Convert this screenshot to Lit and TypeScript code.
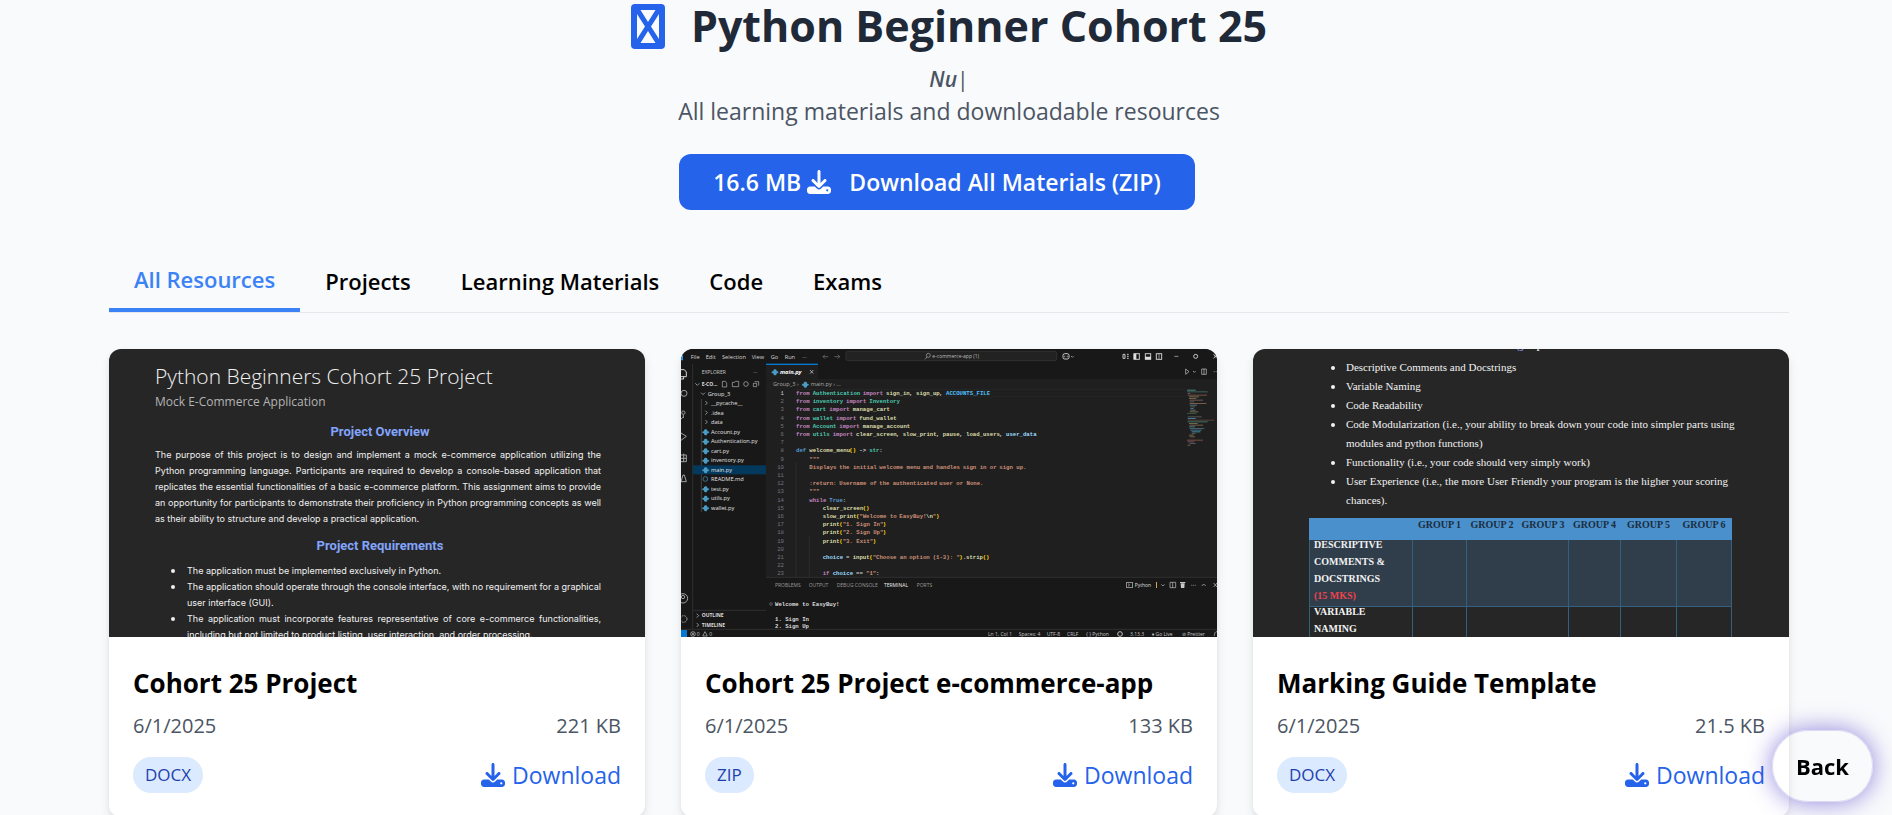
import { LitElement, html, svg, css } from "lit";
import { customElement, property, state } from "lit/decorators.js";
import { classMap } from "lit/directives/class-map.js";

const downloadIcon = html`<svg class="dl" viewBox="0 0 512 512" aria-hidden="true">
  <path
    fill="currentColor"
    d="M288 32c0-17.7-14.3-32-32-32s-32 14.3-32 32V274.7l-73.4-73.4c-12.5-12.5-32.8-12.5-45.3 0s-12.5 32.8 0 45.3l128 128c12.5 12.5 32.8 12.5 45.3 0l128-128c12.5-12.5 12.5-32.8 0-45.3s-32.8-12.5-45.3 0L288 274.7V32zM64 352c-35.3 0-64 28.7-64 64v32c0 35.3 28.7 64 64 64H448c35.3 0 64-28.7 64-64V416c0-35.3-28.7-64-64-64H346.5l-45.3 45.3c-25 25-65.5 25-90.5 0L165.5 352H64zm368 56a24 24 0 1 1 0 48 24 24 0 1 1 0-48z"
  />
</svg>`;

/* ---------- Preview: project brief ---------- */

@customElement("brief-preview")
export class BriefPreview extends LitElement {
  static styles = css`
    :host {
      display: block;
      height: 100%;
      box-sizing: border-box;
      overflow: hidden;
      background: #262626;
      color: #f0f0f0;
      padding: 12px 44px 0 46px;
      font-family: Inter, Roboto, sans-serif;
      font-size: 9px;
      line-height: 16px;
    }
    .title {
      font-family: "Open Sans", "Noto Sans", sans-serif;
      font-weight: 300;
      font-size: 21px;
      line-height: 30px;
    }
    .sub {
      font-family: "Open Sans", "Noto Sans", sans-serif;
      font-size: 12px;
      line-height: 22px;
      color: #b4b4b4;
    }
    .head {
      font-family: Roboto, "Liberation Sans", sans-serif;
      font-weight: 700;
      font-size: 13px;
      line-height: 18px;
      margin-top: 10px;
      color: #82a4fb;
      text-align: center;
      padding-left: 4px;
    }
    .text {
      margin-top: 6px;
    }
    .line {
      display: block;
      white-space: nowrap;
    }
    .full {
      text-align: justify;
      text-align-last: justify;
    }
    ul {
      margin: 8px 0 0;
      padding: 0 0 0 32px;
      list-style: none;
    }
    li {
      position: relative;
    }
    li::before {
      content: "";
      position: absolute;
      left: -16px;
      top: 6px;
      width: 4px;
      height: 4px;
      border-radius: 50%;
      background: #f0f0f0;
    }
  `;

  render() {
    return html`
      <div class="title">Python Beginners Cohort 25 Project</div>
      <div class="sub">Mock E-Commerce Application</div>
      <div class="head">Project Overview</div>
      <div class="text">
        <span class="line full">The purpose of this project is to design and implement a mock e-commerce application utilizing the</span>
        <span class="line full">Python programming language. Participants are required to develop a console-based application that</span>
        <span class="line full">replicates the essential functionalities of a basic e-commerce platform. This assignment aims to provide</span>
        <span class="line full">an opportunity for participants to demonstrate their proficiency in Python programming concepts as well</span>
        <span class="line">as their ability to structure and develop a practical application.</span>
      </div>
      <div class="head">Project Requirements</div>
      <ul>
        <li><span class="line">The application must be implemented exclusively in Python.</span></li>
        <li>
          <span class="line full">The application should operate through the console interface, with no requirement for a graphical</span>
          <span class="line">user interface (GUI).</span>
        </li>
        <li>
          <span class="line full">The application must incorporate features representative of core e-commerce functionalities,</span>
          <span class="line">including but not limited to product listing, user interaction, and order processing.</span>
        </li>
      </ul>
    `;
  }
}

/* ---------- Preview: code editor ---------- */

const KEY = "#c586c0";
const MOD = "#4ec9b0";
const FN = "#dcdcaa";
const STR = "#ce9178";
const VAR = "#9cdcfe";
const DEF = "#569cd6";
const CONST = "#4fc1ff";
const TXT = "#d4d4d4";
const GOLD = "#ffd700";

type Token = [string, string];

const code: [number, number, Token[]][] = [
  [1, 0, [[KEY, "from"], [MOD, " Authentication"], [KEY, " import"], [FN, " sign_in"], [TXT, ","], [FN, " sign_up"], [TXT, ","], [CONST, " ACCOUNTS_FILE"]]],
  [2, 0, [[KEY, "from"], [MOD, " inventory"], [KEY, " import"], [MOD, " Inventory"]]],
  [3, 0, [[KEY, "from"], [MOD, " cart"], [KEY, " import"], [FN, " manage_cart"]]],
  [4, 0, [[KEY, "from"], [MOD, " wallet"], [KEY, " import"], [FN, " fund_wallet"]]],
  [5, 0, [[KEY, "from"], [MOD, " Account"], [KEY, " import"], [FN, " manage_account"]]],
  [6, 0, [[KEY, "from"], [MOD, " utils"], [KEY, " import"], [FN, " clear_screen"], [TXT, ","], [FN, " slow_print"], [TXT, ","], [FN, " pause"], [TXT, ","], [FN, " load_users"], [TXT, ","], [VAR, " user_data"]]],
  [7, 0, []],
  [8, 0, [[DEF, "def"], [FN, " welcome_menu"], [GOLD, "()"], [TXT, " ->"], [MOD, " str"], [TXT, ":"]]],
  [9, 4, [[STR, '"""']]],
  [10, 4, [[STR, "Displays"], [STR, " the initial"], [STR, " welcome menu"], [STR, " and handles"], [STR, " sign in or"], [STR, " sign up."]]],
  [11, 0, []],
  [12, 4, [[STR, ":return:"], [STR, " Username of"], [STR, " the"], [STR, " authenticated"], [STR, " user or None."]]],
  [13, 4, [[STR, '"""']]],
  [14, 4, [[KEY, "while"], [DEF, " True"], [TXT, ":"]]],
  [15, 8, [[FN, "clear_screen"], [GOLD, "()"]]],
  [16, 8, [[FN, "slow_print"], [GOLD, "("], [STR, '"Welcome to'], [STR, " EasyBuy!"], [FN, "\\n"], [STR, '"'], [GOLD, ")"]]],
  [17, 8, [[FN, "print"], [GOLD, "("], [STR, '"1. Sign In"'], [GOLD, ")"]]],
  [18, 8, [[FN, "print"], [GOLD, "("], [STR, '"2. Sign Up"'], [GOLD, ")"]]],
  [19, 8, [[FN, "print"], [GOLD, "("], [STR, '"3. Exit"'], [GOLD, ")"]]],
  [20, 0, []],
  [21, 8, [[VAR, "choice"], [TXT, " ="], [FN, " input"], [GOLD, "("], [STR, '"Choose an'], [STR, " option"], [STR, ' (1-3): "'], [GOLD, ")"], [TXT, "."], [FN, "strip"], [GOLD, "()"]]],
  [22, 0, []],
  [23, 8, [[KEY, "if"], [VAR, " choice"], [TXT, " =="], [STR, ' "1"'], [TXT, ":"]]],
];

const CELL = 10;
const CODE_X = 345;

function codeLine([n, indent, tokens]: [number, number, Token[]]) {
  const y = 138 + Math.round((n - 1) * 24.6);
  let col = indent;
  return svg`
    <text class="mono" x="309" y=${y} text-anchor="end" fill=${n === 1 ? "#cccccc" : "#6e7681"}>${n}</text>
    ${tokens.map(([color, raw]) => {
      const text = raw.trimStart();
      const x = CODE_X + (col + raw.length - text.length) * CELL;
      col += raw.length;
      return svg`<text class="mono strong" x=${x} y=${y} fill=${color}>${text}</text>`;
    })}
  `;
}

const files: [string, string][] = [
  ["dir", "__pycache__"],
  ["dir", ".idea"],
  ["dir", "data"],
  ["py", "Account.py"],
  ["py", "Authentication.py"],
  ["py", "cart.py"],
  ["py", "inventory.py"],
  ["py", "main.py"],
  ["md", "README.md"],
  ["py", "test.py"],
  ["py", "utils.py"],
  ["py", "wallet.py"],
];

function pyMark(x: number, y: number) {
  return svg`<path fill="#4b9cc4" d="M${x} ${y - 7}h4l3 3v3h3l3 3-3 3h-3v3l-3 3h-4l-3-3v-3h-3l-3-3 3-3h3v-3z" />`;
}

function fileRow([kind, name]: [string, string], i: number) {
  const y = 162 + Math.round(i * 28.5);
  const active = name === "main.py";
  return svg`
    ${active ? svg`<rect x="36" y=${y - 13} width="219" height="27" fill="#04395e" />` : null}
    ${kind === "dir"
      ? svg`<path d="M73 ${y - 6}l6 6-6 6" stroke="#c5c5c5" stroke-width="2" fill="none" />`
      : kind === "py"
        ? pyMark(72, y)
        : svg`<circle cx="73" cy=${y} r="7" fill="none" stroke="#519aba" stroke-width="2" />`}
    <text class="ui" x="90" y=${y + 6} fill="#e2e2e2">${name}</text>
  `;
}

const minimap: [number, number, string][] = [
  [0, 26, "#4b8a7d"], [0, 62, "#3f5f58"], [2, 8, "#6d4a6a"], [2, 58, "#7a4f3f"], [6, 30, "#6d6d55"], [6, 22, "#7a5a48"], [8, 40, "#6a5a50"],
  [8, 14, "#555"], [8, 50, "#7a5a48"], [8, 22, "#46768a"], [10, 14, "#5a5a4a"], [10, 10, "#3f6f8a"], [10, 16, "#666"], [8, 26, "#6a6a50"],
  [0, 28, "#37513a"], [0, 0, ""], [2, 42, "#555"], [2, 24, "#3f7f9a"], [2, 80, "#56423a"], [2, 60, "#3f6f5f"], [6, 26, "#6a6a50"],
  [8, 40, "#7a5a48"], [6, 18, "#46768a"], [8, 44, "#46606a"], [10, 34, "#3f6f8a"], [14, 26, "#3f8aa0"], [14, 12, "#555"], [6, 14, "#6a6a50"],
  [8, 16, "#7a5a48"], [0, 0, ""], [0, 48, "#7a4f3f"], [2, 20, "#6d4a6a"], [8, 18, "#555"], [2, 8, "#6a6a50"],
];

@customElement("editor-preview")
export class EditorPreview extends LitElement {
  static styles = css`
    :host {
      display: block;
      height: 100%;
      background: #181818;
    }
    .shot {
      display: block;
      width: 100%;
      height: 100%;
    }
    .ui {
      font-family: "Open Sans", "Noto Sans", sans-serif;
      font-size: 17px;
      font-weight: 500;
    }
    .small {
      font-size: 15px;
    }
    .mono {
      font-family: "Liberation Mono", "DejaVu Sans Mono", monospace;
      font-size: 17px;
    }
    .strong {
      font-weight: 700;
    }
  `;

  render() {
    return html`<svg
      class="shot"
      viewBox="0 0 1608 864"
      preserveAspectRatio="xMidYMid slice"
      role="img"
      aria-label="Code editor with main.py open"
    >
      <rect width="1608" height="864" fill="#181818" />
      <rect x="255" y="90" width="1353" height="594" fill="#1f1f1f" />
      <rect x="255" y="44" width="156" height="50" fill="#1f1f1f" />
      <rect x="255" y="44" width="156" height="4" fill="#0078d4" />
      <path d="M35 45V841M35 784H255M255 685H1608M0 841H1608" stroke="#2f2f2f" stroke-width="3" />
      <path d="M345 121H1512M345 143H1512" stroke="#2a2a2a" stroke-width="2" />
      <path d="M345 340V684M385 560V684" stroke="#333" stroke-width="2" />

      <path d="M0 18l6-6v22h-6z" fill="#2b9cf0" />
      ${(
        [
          [29, "File"],
          [74, "Edit"],
          [123, "Selection"],
          [212, "View"],
          [269, "Go"],
          [311, "Run"],
          [364, "···"],
        ] as [number, string][]
      ).map(([x, t]) => svg`<text class="ui" x=${x} y="29" fill="#d6d6d6">${t}</text>`)}
      <path
        d="M442 23h-16m6-6l-6 6 6 6M460 23h16m-6-6l6 6-6 6"
        stroke="#7d7d7d"
        stroke-width="2"
        fill="none"
      />
      <rect x="495" y="7" width="632" height="28" rx="5" fill="#222" stroke="#3a3a3a" stroke-width="2" />
      <circle cx="742" cy="19" r="6" stroke="#aaa" stroke-width="2" fill="none" />
      <path d="M738 24l-6 7" stroke="#aaa" stroke-width="2" />
      <text class="ui small" x="754" y="28" fill="#bdbdbd">e-commerce-app (1)</text>
      <g fill="none" stroke="#c8c8c8" stroke-width="3">
        <rect x="1146" y="14" width="18" height="16" rx="5" />
        <path d="M1151 20v5M1159 20v5M1170 21l4 4 4-4" stroke-width="2" />
        <path d="M1326 16h6v12h-6zM1338 16h5M1338 28h5M1338 22h5" />
        <rect x="1359" y="14" width="16" height="17" />
        <rect x="1393" y="14" width="16" height="17" />
        <rect x="1426" y="14" width="16" height="17" />
        <path d="M1434 14v17M1480 22h12" stroke-width="2" />
        <circle cx="1544" cy="22" r="6" />
        <path d="M1598 16l10 12M1608 16l-10 12" />
      </g>
      <path d="M1358 14h8v17h-8zM1392 23h18v8h-18z" fill="#e0e0e0" />
      <g fill="none" stroke="#c8c8c8" stroke-width="2">
        <path d="M1514 60l10 8-10 8zM1536 66l4 4 4-4M1562 60h14v16h-14zM1569 60v16" />
        <path d="M1598 68h10" stroke-dasharray="3 3" />
      </g>

      <text class="ui small" x="62" y="75" fill="#c8c8c8">EXPLORER</text>
      <text class="ui" x="216" y="74" fill="#c8c8c8">···</text>
      <path d="M43 103l6 6 6-6M60 131l6 6 6-6" stroke="#c5c5c5" stroke-width="2" fill="none" />
      <text class="ui small strong" x="62" y="110" fill="#dddddd">E-CO...</text>
      <g fill="none" stroke="#b8b8b8" stroke-width="2">
        <path d="M124 97h9l4 5v12h-13zM154 100h7l2-3h10v16h-19z" />
        <circle cx="195" cy="105" r="7" />
        <path d="M217 103h10v10h-10zM221 98h12v12" />
      </g>
      <text class="ui" x="80" y="140" fill="#e2e2e2">Group_3</text>
      <path d="M61 150V489" stroke="#585858" stroke-width="2" />
      ${files.map(fileRow)}

      <g fill="none" stroke="#a0a0a0" stroke-width="3">
        <path d="M0 62h10l6 7v14h-16M0 90h8v-6" stroke="#d8d8d8" />
        <circle cx="9" cy="133" r="9" />
        <circle cx="7" cy="191" r="5" />
        <path d="M7 197v10M7 204l-7 6M0 252l16 10-16 12M0 318h16v20H0M8 314v24M0 328h16M0 398l6-20h4l6 20z" />
        <circle cx="6" cy="748" r="14" />
        <circle cx="6" cy="744" r="5" />
        <circle cx="8" cy="810" r="10" stroke-dasharray="5 3" />
      </g>
      <path d="M47 794l6 6-6 6M47 822l6 6-6 6" stroke="#c5c5c5" stroke-width="2" fill="none" />
      <text class="ui small strong" x="62" y="805" fill="#dddddd">OUTLINE</text>
      <text class="ui small strong" x="62" y="833" fill="#dddddd">TIMELINE</text>

      ${pyMark(280, 68)}
      <text class="ui strong" x="297" y="75" fill="#ffffff" font-style="italic">main.py</text>
      <path d="M387 63l10 11M397 63l-10 11" stroke="#e0e0e0" stroke-width="2" />
      <text class="ui" x="276" y="111" fill="#a9a9a9">Group_3 ›</text>
      ${pyMark(371, 105)}
      <text class="ui" x="389" y="111" fill="#a9a9a9">main.py › ...</text>

      ${code.map(codeLine)}

      ${minimap.map(([dx, w, color], i) =>
        w ? svg`<rect x=${1518 + dx} y=${122 + i * 5} width=${w} height="3" fill=${color} />` : null
      )}

      ${(
        [
          [282, "PROBLEMS", "#9a9a9a"],
          [383, "OUTPUT", "#9a9a9a"],
          [467, "DEBUG CONSOLE", "#9a9a9a"],
          [609, "TERMINAL", "#ededed"],
          [707, "PORTS", "#9a9a9a"],
        ] as [number, string, string][]
      ).map(([x, t, c]) => svg`<text class="ui small" x=${x} y="713" fill=${c}>${t}</text>`)}
      <g fill="none" stroke="#c8c8c8" stroke-width="2">
        <rect x="1337" y="700" width="17" height="16" />
        <path d="M1341 704l5 4-5 4M1441 706l5 5 5-5M1562 711l6-6 6 6M1598 702l10 12M1608 702l-10 12" />
        <path d="M1467 700h17v16h-17zM1475 700v16" />
        <path d="M1531 709h14" stroke-dasharray="3 3" />
      </g>
      <path d="M1425 699h3v18h-3z" fill="#d7a35a" />
      <path d="M1499 703h12l-1 14h-10zM1497 699h16v3h-16z" fill="#c8c8c8" />
      <text class="ui small" x="1361" y="714" fill="#dddddd">Python</text>
      <circle cx="270" cy="765" r="4" fill="none" stroke="#777" stroke-width="2" />
      <text class="mono strong" x="282" y="771" fill="#dddddd">Welcome to EasyBuy!</text>
      <text class="mono strong" x="282" y="816" fill="#dddddd">1. Sign In</text>
      <text class="mono strong" x="282" y="837" fill="#dddddd">2. Sign Up</text>

      <rect y="843" width="18" height="21" fill="#0078d4" />
      <g fill="none" stroke="#c0c0c0" stroke-width="2">
        <circle cx="36" cy="855" r="7" />
        <path d="M32 851l8 8M40 851l-8 8M65 861l7-13 7 13z" />
      </g>
      ${(
        [
          [47, "0"],
          [85, "0"],
          [921, "Ln 1, Col 1"],
          [1013, "Spaces: 4"],
          [1097, "UTF-8"],
          [1158, "CRLF"],
          [1215, "{ } Python"],
          [1347, "3.13.3"],
          [1412, "♦ Go Live"],
          [1503, "⊘ Prettier"],
        ] as [number, string][]
      ).map(([x, t]) => svg`<text class="ui small" x=${x} y="860" fill="#c4c4c4">${t}</text>`)}
      <circle cx="1317" cy="855" r="7" fill="none" stroke="#c0c0c0" stroke-width="3" />
      <path d="M1600 861c0-8 2-13 8-13" fill="none" stroke="#c0c0c0" stroke-width="2" />
    </svg>`;
  }
}

/* ---------- Preview: marking guide ---------- */

@customElement("guide-preview")
export class GuidePreview extends LitElement {
  static styles = css`
    :host {
      display: block;
      height: 100%;
      overflow: hidden;
      background: #262626;
      color: #f2f2f2;
      font-family: "Liberation Serif", serif;
      font-size: 11px;
      line-height: 19px;
    }
    .cut {
      height: 9px;
      margin-left: 264px;
      display: flex;
      gap: 13px;
      align-items: flex-end;
      font-size: 13px;
      line-height: 28px;
    }
    .blue {
      color: #8d9bf0;
    }
    ul {
      margin: 0;
      padding: 0 61px 0 93px;
      list-style: none;
    }
    li {
      position: relative;
    }
    li::before {
      content: "";
      position: absolute;
      left: -15px;
      top: 8px;
      width: 4px;
      height: 4px;
      border-radius: 50%;
      background: #f2f2f2;
    }
    .line {
      display: block;
      white-space: nowrap;
    }
    .full {
      text-align: justify;
      text-align-last: justify;
    }
    table {
      margin: 8px 57px 0 56px;
      width: calc(100% - 113px);
      table-layout: fixed;
      border-collapse: collapse;
      font-size: 10px;
      font-weight: 700;
      line-height: 17px;
    }
    th,
    td {
      padding: 0;
      vertical-align: top;
      border: 1px solid #34607f;
    }
    th {
      height: 20px;
      line-height: 12px;
      background: #4a90cc;
      border-color: #4a90cc;
      color: #1c2d3c;
      white-space: nowrap;
    }
    .c0 {
      width: 102px;
    }
    .c1 {
      width: 53px;
    }
    .c2,
    .c3 {
      width: 50px;
    }
    .c4 {
      width: 51px;
    }
    .c5 {
      width: 55px;
    }
    .c6 {
      width: 54px;
    }
    .name {
      margin: -4px 4px 2px;
    }
    .tint td {
      background: #303e4c;
    }
    .red {
      color: #ee434c;
    }
  `;

  render() {
    const cells = html`<td></td>
      <td colspan="2"></td>
      <td></td>
      <td></td>
      <td></td>`;
    return html`
      <div class="cut" aria-hidden="true"><span class="blue">g</span><span>p</span></div>
      <ul>
        <li><span class="line">Descriptive Comments and Docstrings</span></li>
        <li><span class="line">Variable Naming</span></li>
        <li><span class="line">Code Readability</span></li>
        <li>
          <span class="line full">Code Modularization (i.e., your ability to break down your code into simpler parts using</span>
          <span class="line">modules and python functions)</span>
        </li>
        <li><span class="line">Functionality (i.e., your code should very simply work)</span></li>
        <li>
          <span class="line full">User Experience (i.e., the more User Friendly your program is the higher your scoring</span>
          <span class="line">chances).</span>
        </li>
      </ul>
      <table>
        <thead>
          <tr>
            <th class="c0"></th>
            ${[1, 2, 3, 4, 5, 6].map((n) => html`<th class="c${n}">GROUP ${n}</th>`)}
          </tr>
        </thead>
        <tbody>
          <tr class="tint">
            <td>
              <div class="name">DESCRIPTIVE COMMENTS &amp; DOCSTRINGS<br /><span class="red">(15 MKS)</span></div>
            </td>
            ${cells}
          </tr>
          <tr>
            <td><div class="name">VARIABLE<br />NAMING</div></td>
            ${cells}
          </tr>
        </tbody>
      </table>
    `;
  }
}

/* ---------- Resource card ---------- */

interface Resource {
  title: string;
  date: string;
  size: string;
  type: string;
  preview: "brief" | "editor" | "guide";
}

@customElement("resource-card")
export class ResourceCard extends LitElement {
  @property({ attribute: false }) resource!: Resource;

  static styles = css`
    :host {
      display: block;
      border-radius: 12px;
      overflow: hidden;
      background: #fff;
      box-shadow: 0 6px 12px rgba(0, 0, 0, 0.07), 0 2px 5px rgba(0, 0, 0, 0.06);
    }
    .thumb {
      height: 288px;
      overflow: hidden;
    }
    .body {
      padding: 28px 24px 24px;
    }
    h3 {
      margin: 0 0 10px;
      font-size: 26px;
      font-weight: 700;
      line-height: 36px;
      color: #000;
    }
    .row {
      display: flex;
      justify-content: space-between;
      align-items: center;
    }
    .meta {
      margin-bottom: 16px;
      font-size: 20px;
      line-height: 30px;
      color: #4b5563;
    }
    .badge {
      padding: 0 12px;
      border-radius: 18px;
      background: #dbeafe;
      color: #1e40af;
      font-size: 17px;
      line-height: 36px;
    }
    .link {
      display: flex;
      align-items: center;
      gap: 7px;
      color: #2563eb;
      font-size: 23px;
      line-height: 36px;
      text-decoration: none;
    }
    .dl {
      width: 24px;
      height: 24px;
    }
  `;

  render() {
    const r = this.resource;
    const previews = {
      brief: html`<brief-preview></brief-preview>`,
      editor: html`<editor-preview></editor-preview>`,
      guide: html`<guide-preview></guide-preview>`,
    };
    return html`
      <div class="thumb">${previews[r.preview]}</div>
      <div class="body">
        <h3>${r.title}</h3>
        <div class="row meta"><span>${r.date}</span><span>${r.size}</span></div>
        <div class="row">
          <span class="badge">${r.type}</span>
          <a class="link" href="#download">${downloadIcon}Download</a>
        </div>
      </div>
    `;
  }
}

/* ---------- Page ---------- */

const tabs = ["All Resources", "Projects", "Learning Materials", "Code", "Exams"];

const resources: Resource[] = [
  { title: "Cohort 25 Project", date: "6/1/2025", size: "221 KB", type: "DOCX", preview: "brief" },
  { title: "Cohort 25 Project e-commerce-app", date: "6/1/2025", size: "133 KB", type: "ZIP", preview: "editor" },
  { title: "Marking Guide Template", date: "6/1/2025", size: "21.5 KB", type: "DOCX", preview: "guide" },
];

@customElement("app-root")
export class AppRoot extends LitElement {
  @state() private active = 0;

  static styles = css`
    :host {
      display: block;
      box-sizing: border-box;
      height: 100vh;
      overflow: hidden;
      padding: 0 103px 0 109px;
      background: #f9fafc;
      font-family: "Open Sans", "Noto Sans", sans-serif;
    }
    header {
      display: flex;
      flex-direction: column;
      align-items: center;
    }
    h1 {
      display: flex;
      align-items: center;
      gap: 26px;
      margin: 0 0 12px;
      font-size: 43px;
      font-weight: 700;
      line-height: 52px;
      color: #1f2937;
      white-space: nowrap;
    }
    .mark {
      width: 34px;
      height: 45px;
    }
    .typed {
      font-size: 21px;
      font-style: italic;
      font-weight: 600;
      line-height: 30px;
      color: #4b5563;
    }
    .caret {
      font-style: normal;
      font-weight: 500;
    }
    .lead {
      margin: 0 0 26px;
      font-size: 23px;
      line-height: 34px;
      color: #4b5563;
    }
    .actions {
      padding-right: 24px;
    }
    .all {
      display: flex;
      align-items: center;
      padding: 10px 34px;
      border: 0;
      border-radius: 12px;
      background: #2563eb;
      color: #fff;
      font: inherit;
      font-size: 23px;
      font-weight: 600;
      line-height: 36px;
      cursor: pointer;
    }
    .dl {
      width: 24px;
      height: 24px;
      margin: 0 18px 0 6px;
    }
    nav {
      display: flex;
      margin: 42px 0 36px;
      border-bottom: 1px solid #e5e7eb;
    }
    .tab {
      height: 60px;
      padding: 0 25px 2px;
      border: 0;
      background: none;
      color: #000;
      font: inherit;
      font-size: 22px;
      font-weight: 600;
      cursor: pointer;
    }
    .on {
      border-bottom: 4px solid #3b82f6;
      color: #3b82f6;
    }
    .grid {
      display: grid;
      grid-template-columns: repeat(3, minmax(0, 1fr));
      gap: 36px;
    }
    .back {
      position: fixed;
      right: 19px;
      bottom: 13px;
      height: 72px;
      padding: 0 23px;
      border: 1px solid #dcdaf0;
      border-radius: 36px;
      background: transparent;
      box-shadow: 0 0 24px rgba(70, 50, 200, 0.6);
      color: #000;
      font: inherit;
      font-size: 22px;
      font-weight: 700;
      cursor: pointer;
    }
  `;

  render() {
    return html`
      <header>
        <h1>
          <svg class="mark" viewBox="0 0 34 45" aria-hidden="true">
            <rect width="34" height="45" rx="4" fill="#2563eb" />
            <path
              d="M9.500 6h15l-7.500 12zM6 10l8 12.500-8 12.500zM28 10l-8 12.500 8 12.500zM9.500 39h15l-7.500-12z"
              fill="#f9fafc"
            />
          </svg>
          Python Beginner Cohort 25
        </h1>
        <div class="typed">Nu<span class="caret">|</span></div>
        <p class="lead">All learning materials and downloadable resources</p>
        <div class="actions">
          <button class="all" type="button">16.6 MB${downloadIcon}Download All Materials (ZIP)</button>
        </div>
      </header>
      <nav>
        ${tabs.map(
          (t, i) => html`<button
            type="button"
            class=${classMap({ tab: true, on: i === this.active })}
            @click=${() => (this.active = i)}
          >
            ${t}
          </button>`
        )}
      </nav>
      <main class="grid">
        ${resources.map((r) => html`<resource-card .resource=${r}></resource-card>`)}
      </main>
      <button class="back" type="button">Back</button>
    `;
  }
}
